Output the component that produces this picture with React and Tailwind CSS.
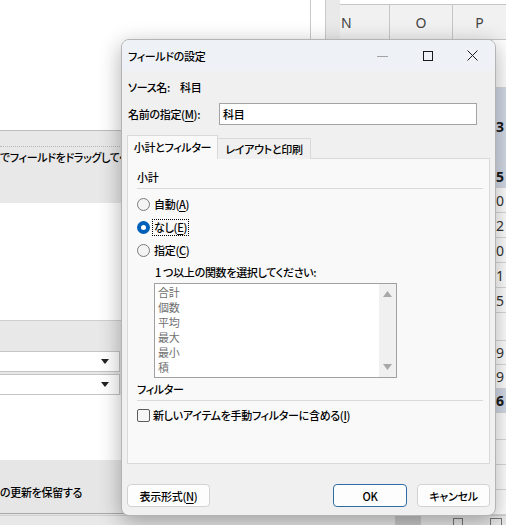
import React from "react";

// spreadsheet rows behind the dialog (only the right sliver shows)
const rows = [
  { h: 48, t: "" },
  { h: 77, t: "3", b: true, blue: true },
  { h: 23, t: "5", b: true, blue: true },
  { h: 25, t: "0" },
  { h: 25, t: "2" },
  { h: 25, t: "0" },
  { h: 25, t: "1" },
  { h: 25, t: "5" },
  { h: 28, t: "" },
  { h: 24, t: "9" },
  { h: 24, t: "9" },
  { h: 24, t: "6", b: true, blue: true },
  { h: 27, t: "" },
  { h: 25, t: "" },
  { h: 25, t: "" },
  { h: 25, t: "" },
];

const functions = ["合計", "個数", "平均", "最大", "最小", "積"];

const U = ({ children }) => <span className="underline underline-offset-2">{children}</span>;

function Radio({ checked, label, focus }) {
  return (
    <div className="flex items-center h-[23px] gap-[2px]">
      {checked ? (
        <span className="w-[13px] h-[13px] rounded-full bg-[#005fb8] flex items-center justify-center">
          <span className="w-[5px] h-[5px] rounded-full bg-white" />
        </span>
      ) : (
        <span className="w-[13px] h-[13px] rounded-full border border-[#7a7a7a] bg-[#f4f4f4]" />
      )}
      <span
        className={`px-[1px] leading-[15px] border ${
          focus ? "border-dotted border-black" : "border-transparent"
        }`}
      >
        {label}
      </span>
    </div>
  );
}

function Dropdown() {
  return (
    <div className="w-[120px] h-[21px] bg-white border-y border-r border-[#c4c4c4] flex items-center justify-end pr-[10px]">
      <svg width="8" height="5" viewBox="0 0 8 5">
        <path d="M0 0H8L4 5Z" fill="#222" />
      </svg>
    </div>
  );
}

export default function App() {
  return (
    <div className="relative w-[506px] h-[525px] overflow-hidden bg-white text-[11px] font-medium tracking-[-0.3px] text-black font-['Noto_Sans_CJK_JP',sans-serif] [font-feature-settings:'palt']">
      {/* ===== background: field list pane + sheet ===== */}
      <div className="flex h-[515px]">
        <div className="w-[311px] flex flex-col border-r border-[#c8c8c8]">
          <div className="h-[130px] bg-white" />
          <div className="h-[73px] bg-[#e8e8e8] border-t border-[#bdbdbd]">
            <div className="mt-[15px] border-t border-dotted border-[#b8b8b8]" />
            <div className="mt-[2px] leading-[16px] whitespace-nowrap">でフィールドをドラッグしてください:</div>
          </div>
          <div className="h-[117px] bg-white" />
          <div className="h-[75px] bg-[#e8e8e8] border-t border-[#cfcfcf] flex flex-col gap-[2px] pt-[30px]">
            <Dropdown />
            <Dropdown />
          </div>
          <div className="h-[65px] bg-white" />
          <div className="h-[53px] bg-[#e6e6e6] pt-[24px] leading-[16px] whitespace-nowrap">の更新を保留する</div>
          <div className="h-[2px] border-t border-[#a8a8a8] bg-[#e6e6e6]" />
        </div>
        <div className="w-[15px] bg-white border-r border-[#c8c8c8]" />
        <div className="w-[14px] bg-[#e9e9e9]" />
        <div className="flex-1 flex flex-col tracking-normal font-normal font-['Noto_Sans',sans-serif] [font-feature-settings:normal]">
          <div className="h-[5px] border-b border-[#c6c6c6] bg-white" />
          <div className="h-[35px] flex bg-[#f1f1f1] text-[14px] text-[#444] border-b border-[#c6c6c6]">
            <div className="w-[50px] border-r border-[#c6c6c6] flex items-center pl-[1px]">N</div>
            <div className="w-[63px] border-r border-[#c6c6c6] flex items-center justify-center">O</div>
            <div className="flex-1 flex items-center justify-center">P</div>
          </div>
          {rows.map((r, i) => (
            <div
              key={i}
              style={{ height: r.h }}
              className={`flex items-center justify-end pr-[2px] text-[14px] border-b border-[#d9d9d9] ${
                r.blue ? "bg-[#d3dbe8]" : "bg-white"
              } ${r.b ? "font-bold text-[#1a1a1a]" : "text-[#333]"}`}
            >
              {r.t}
            </div>
          ))}
        </div>
      </div>
      <div className="h-[10px] bg-[#e8e8e8] border-t border-[#cfcfcf] flex items-start">
        <div className="ml-[395px] w-[26px] h-[10px] bg-[#c9c9c9]" />
        <div className="ml-[32px] mt-[2px] w-[10px] h-[8px] border border-[#777]" />
        <div className="ml-[27px] mt-[2px] w-[12px] h-[8px] border border-[#777]" />
      </div>

      {/* ===== dialog: フィールドの設定 ===== */}
      <div className="absolute left-[121px] top-[39px] w-[375px] h-[477px] rounded-[8px] overflow-hidden border border-[#b4b4b4] bg-[#f0f0f0] shadow-[0_6px_22px_rgba(0,0,0,0.32)] flex flex-col">
        <div className="h-[31px] shrink-0 bg-[#eef2f7] flex items-center">
          <span className="pl-[6px] leading-[16px]">フィールドの設定</span>
          <div className="ml-auto flex h-full">
            <div className="w-[45px] flex items-center justify-center">
              <svg width="11" height="10" viewBox="0 0 11 10">
                <path d="M0 5.5H11" stroke="#a3a3a3" />
              </svg>
            </div>
            <div className="w-[45px] flex items-center justify-center">
              <svg width="10" height="10" viewBox="0 0 10 10">
                <rect x="0.5" y="0.5" width="9" height="9" fill="none" stroke="#1a1a1a" />
              </svg>
            </div>
            <div className="w-[45px] flex items-center justify-center">
              <svg width="11" height="11" viewBox="0 0 11 11">
                <path d="M0.5 0.5L10.5 10.5M10.5 0.5L0.5 10.5" stroke="#1a1a1a" />
              </svg>
            </div>
          </div>
        </div>

        <div className="flex-1 flex flex-col px-[5px]">
          <div className="mt-[8px] h-[16px] leading-[16px] flex pl-[1px]">
            <span className="w-[52px]">ソース名:</span>
            <span>科目</span>
          </div>
          <div className="mt-[8px] h-[22px] flex items-center pl-[1px]">
            <span className="w-[91px] leading-[16px]">
              名前の指定(<U>M</U>):
            </span>
            <div className="w-[258px] h-[22px] bg-white border border-[#a3a3a3] flex items-center pl-[3px] leading-[16px]">
              科目
            </div>
          </div>

          {/* tabs */}
          <div className="mt-[10px] flex items-end relative z-10 -mb-px">
            <div className="w-[91px] h-[24px] pb-[2px] bg-[#f9f9f9] border border-b-0 border-[#d9d9d9] flex items-center justify-center leading-[16px]">
              小計とフィルター
            </div>
            <div className="w-[93px] h-[21px] bg-[#f0f0f0] border border-b-0 border-l-0 border-[#d9d9d9] flex items-center justify-center leading-[16px]">
              レイアウトと印刷
            </div>
          </div>
          <div className="w-[363px] h-[306px] shrink-0 bg-[#f9f9f9] border border-[#d9d9d9] pl-[9px] pr-[6px] flex flex-col">
            <div className="mt-[10px] h-[16px] leading-[16px]">小計</div>
            <div className="mt-[3px] border-t border-[#dadada]" />
            <div className="mt-[4px] flex flex-col">
              <Radio label={<>自動(<U>A</U>)</>} />
              <Radio checked focus label={<>なし(<U>E</U>)</>} />
              <Radio label={<>指定(<U>C</U>)</>} />
            </div>
            <div className="mt-[2px] ml-[18px] h-[16px] leading-[16px]">1 つ以上の関数を選択してください:</div>
            <div className="mt-[3px] ml-[17px] w-[243px] h-[95px] bg-white border border-[#a0a0a0] flex">
              <div className="flex-1 pl-[3px] pt-[1px] text-[#6f6f6f] font-normal">
                {functions.map((f) => (
                  <div key={f} className="h-[15px] leading-[15px]">
                    {f}
                  </div>
                ))}
              </div>
              <div className="w-[17px] bg-[#f0f0f0] flex flex-col items-center justify-between py-[7px]">
                <svg width="9" height="6" viewBox="0 0 9 6">
                  <path d="M4.5 0L9 6H0Z" fill="#a8a8a8" />
                </svg>
                <svg width="9" height="6" viewBox="0 0 9 6">
                  <path d="M0 0H9L4.5 6Z" fill="#a8a8a8" />
                </svg>
              </div>
            </div>
            <div className="mt-[3px] h-[16px] leading-[16px]">フィルター</div>
            <div className="mt-[3px] border-t border-[#dadada]" />
            <div className="mt-[3px] h-[22px] flex items-center gap-[3px]">
              <span className="w-[13px] h-[13px] rounded-[2px] border border-[#5c5c5c] bg-[#f6f6f6]" />
              <span className="leading-[16px]">
                新しいアイテムを手動フィルターに含める(<U>I</U>)
              </span>
            </div>
          </div>

          {/* buttons */}
          <div className="mt-[20px] flex">
            <button className="w-[83px] h-[23px] rounded-[4px] bg-[#fdfdfd] border border-[#d2d2d2] leading-[16px]">
              表示形式(<U>N</U>)
            </button>
            <button className="ml-auto w-[74px] h-[23px] rounded-[4px] bg-[#fdfdfd] border border-[#2d6ca5] leading-[16px]">
              OK
            </button>
            <button className="ml-[10px] w-[73px] h-[23px] rounded-[4px] bg-[#fdfdfd] border border-[#d2d2d2] leading-[16px]">
              キャンセル
            </button>
          </div>
        </div>
      </div>
    </div>
  );
}
